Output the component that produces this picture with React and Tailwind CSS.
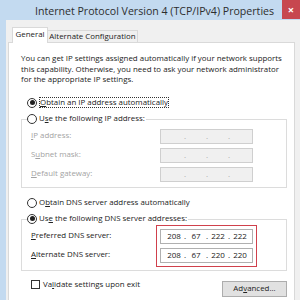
function Radio({ checked }) {
  return (
    <span className="flex items-center justify-center w-[10px] h-[10px] rounded-full border border-[#333] bg-white shrink-0">
      {checked && <span className="w-[5px] h-[5px] rounded-full bg-[#222]" />}
    </span>
  );
}

function RadioRow({ checked, children, focus, className = '' }) {
  return (
    <div className={`flex h-[12px] items-center pl-[6px] ${className}`}>
      <div className="relative z-10 flex items-center gap-[2px] bg-white pr-[1px]">
        <Radio checked={checked} />
        <span className={`whitespace-nowrap leading-[11px] ${focus ? 'outline outline-1 outline-dotted outline-[#333] -outline-offset-1 px-[1px]' : ''}`}>
          {children}
        </span>
      </div>
    </div>
  );
}

function IpBox({ parts, disabled }) {
  return (
    <div
      className={`flex h-[15px] w-[93px] items-center border ${
        disabled ? 'border-[#cfcfcf] bg-[#f0f0f0] text-[#a8a8a8]' : 'border-[#b0b0b0] bg-white text-[#1a1a1a]'
      }`}
    >
      <div className="flex w-full items-center pl-[5px] text-[8px]">
        {[0, 1, 2, 3].map((i) => (
          <div key={i} className="flex items-center">
            <span className="w-[16px] text-center">{parts ? parts[i] : ''}</span>
            {i < 3 && <span className="w-[6px] text-center">.</span>}
          </div>
        ))}
      </div>
    </div>
  );
}

export default function App() {
  return (
    <div className="relative flex h-[300px] w-[300px] flex-col overflow-hidden bg-[#c3daf0] font-['Open_Sans',sans-serif] text-[7.9px] text-[#222]">
      {/* title bar */}
      <div className="flex h-[20px] shrink-0 items-start">
        <div className="flex-1 pl-[35px] pt-[4px] text-[10.6px] leading-[14px] text-[#2d2d2d] whitespace-nowrap">
          Internet Protocol Version 4 (TCP/IPv4) Properties
        </div>
        <div className="flex h-[19px] w-[18px] items-center justify-center bg-[#c7474f] text-[11px] font-bold leading-none text-white">
          ×
        </div>
      </div>

      {/* body */}
      <div className="ml-[6px] flex flex-1 flex-col bg-[#f0f0f0]">
        {/* tabs */}
        <div className="flex items-end pl-[6px] pt-[7px]">
          <div className="relative z-10 -mb-px flex h-[16px] w-[36px] items-center justify-center border-x border-t border-[#d9d9d9] bg-white pb-[1px]">
            General
          </div>
          <div className="flex h-[12px] w-[90px] items-center justify-center border-r border-t border-[#d9d9d9] bg-[#f0f0f0]">
            Alternate Configuration
          </div>
        </div>

        {/* panel */}
        <div className="ml-[2px] mr-[5px] flex-1 border border-b-0 border-[#d9d9d9] bg-white pl-[12px] pr-[7px] pt-[10px]">
          <div className="leading-[10.5px] whitespace-nowrap">
            You can get IP settings assigned automatically if your network supports
            <br />
            this capability. Otherwise, you need to ask your network administrator
            <br />
            for the appropriate IP settings.
          </div>

          <RadioRow checked focus className="mt-[12px]">
            <u>O</u>btain an IP address automatically
          </RadioRow>
          <RadioRow className="mt-[4px]">
            U<u>s</u>e the following IP address:
          </RadioRow>
          <div className="-mt-[6px] border border-[#dcdcdc] pl-[9px] pt-[9px] pb-[5px]">
            {[
              [<><u>I</u>P address:</>],
              [<>S<u>u</u>bnet mask:</>],
              [<><u>D</u>efault gateway:</>],
            ].map(([label], i) => (
              <div key={i} className={`flex items-center ${i ? 'mt-[4px]' : ''}`}>
                <span className="w-[129px] text-[#a3a3a3]">{label}</span>
                <IpBox disabled />
              </div>
            ))}
          </div>

          <RadioRow className="mt-[9px]">
            O<u>b</u>tain DNS server address automatically
          </RadioRow>
          <RadioRow checked className="mt-[4px]">
            Us<u>e</u> the following DNS server addresses:
          </RadioRow>
          <div className="-mt-[6px] flex border border-[#dcdcdc] pl-[9px] pt-[5px] pb-[3px]">
            <div className="flex w-[125px] flex-col pt-[4px]">
              <span className="flex h-[15px] items-center">
                <u>P</u>referred DNS server:
              </span>
              <span className="mt-[4px] flex h-[15px] items-center">
                <u>A</u>lternate DNS server:
              </span>
            </div>
            <div className="border border-[#d0404c] p-[3px]">
              <IpBox parts={['208', '67', '222', '222']} />
              <div className="mt-[4px]">
                <IpBox parts={['208', '67', '220', '220']} />
              </div>
            </div>
          </div>

          <div className="mt-[8px] flex items-start justify-between">
            <div className="flex h-[12px] items-center gap-[3px] pl-[10px]">
              <span className="h-[9px] w-[9px] border border-[#333] bg-white" />
              <span>
                Va<u>l</u>idate settings upon exit
              </span>
            </div>
            <div className="mt-[2px] flex h-[16px] w-[65px] items-center justify-center border border-[#adadad] bg-[#e1e1e1]">
              Ad<u>v</u>anced...
            </div>
          </div>
        </div>
      </div>
    </div>
  );
}
